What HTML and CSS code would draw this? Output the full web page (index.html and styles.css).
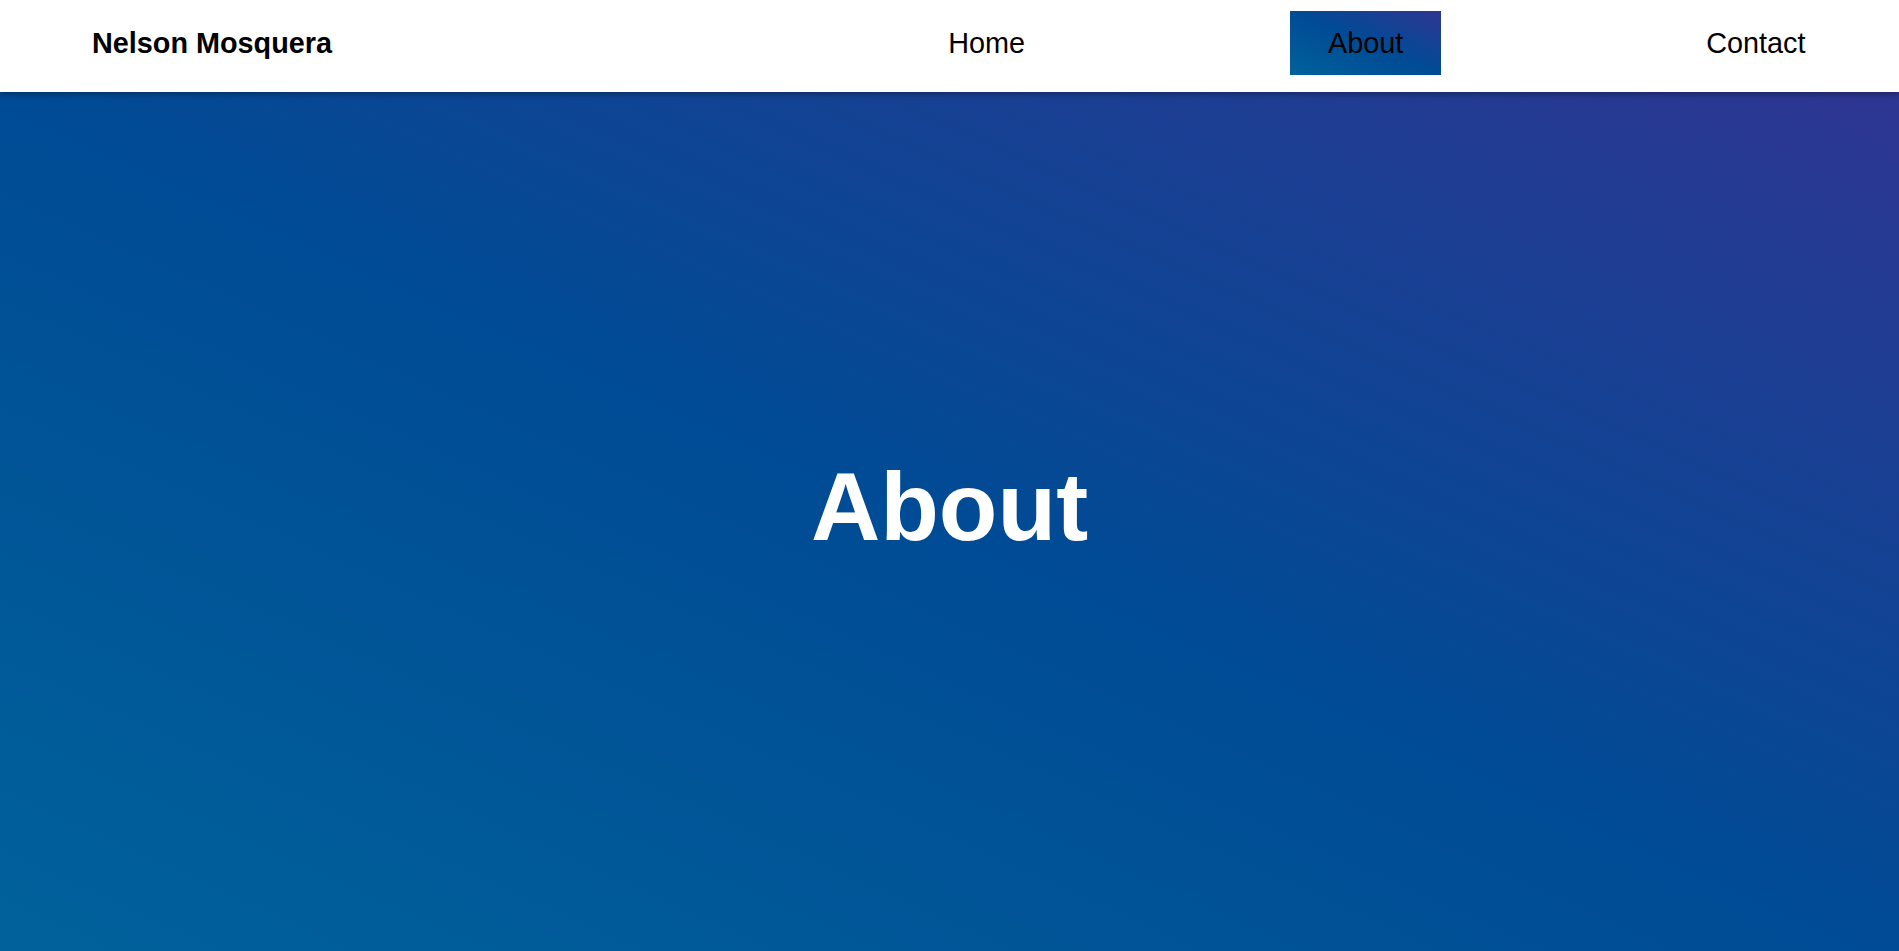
FILE: index.html
```html
<!DOCTYPE html>
<html lang="en">
<head>
<meta charset="utf-8">
<title>About - Nelson Mosquera</title>
<link rel="stylesheet" href="styles.css">
</head>
<body>
<header class="site-header">
  <div class="logo">Nelson Mosquera</div>
  <nav class="main-nav">
    <a class="nav-link" href="#">Home</a>
    <a class="nav-link active" href="#">About</a>
    <a class="nav-link" href="#">Contact</a>
  </nav>
</header>
<main class="hero">
  <h1 class="hero-title">About</h1>
</main>
</body>
</html>
```
FILE: styles.css
```css
* { box-sizing: border-box; }
html, body { margin: 0; padding: 0; height: 100%; }
body {
  font-family: "Liberation Sans", Arial, sans-serif;
  display: flex;
  flex-direction: column;
  overflow: hidden;
}
.site-header {
  position: relative;
  z-index: 2;
  height: 92px;
  flex: 0 0 92px;
  background: #fff;
  display: flex;
  justify-content: space-between;
  align-items: flex-start;
  padding: 11px 56px 0 92px;
  box-shadow: 0 2px 6px rgba(0, 0, 0, 0.35);
}
.logo {
  font-size: 28.8px;
  font-weight: bold;
  color: #000;
  padding: 15.5px 0;
  line-height: 33px;
}
.main-nav {
  display: flex;
  gap: 228px;
}
.nav-link {
  font-size: 28.8px;
  line-height: 33px;
  color: #000;
  text-decoration: none;
  padding: 15.5px 37.5px;
}
.nav-link.active {
  background: linear-gradient(to top right, #00629b 0%, #004b95 50%, #2e3692 100%);
}
.hero {
  flex: 1;
  display: flex;
  align-items: center;
  justify-content: center;
  padding-bottom: 30px;
  background: linear-gradient(to top right, #00629b 0%, #004b95 50%, #2e3692 100%);
}
.hero-title {
  margin: 0;
  color: #fff;
  font-size: 96px;
  font-weight: bold;
}
```
